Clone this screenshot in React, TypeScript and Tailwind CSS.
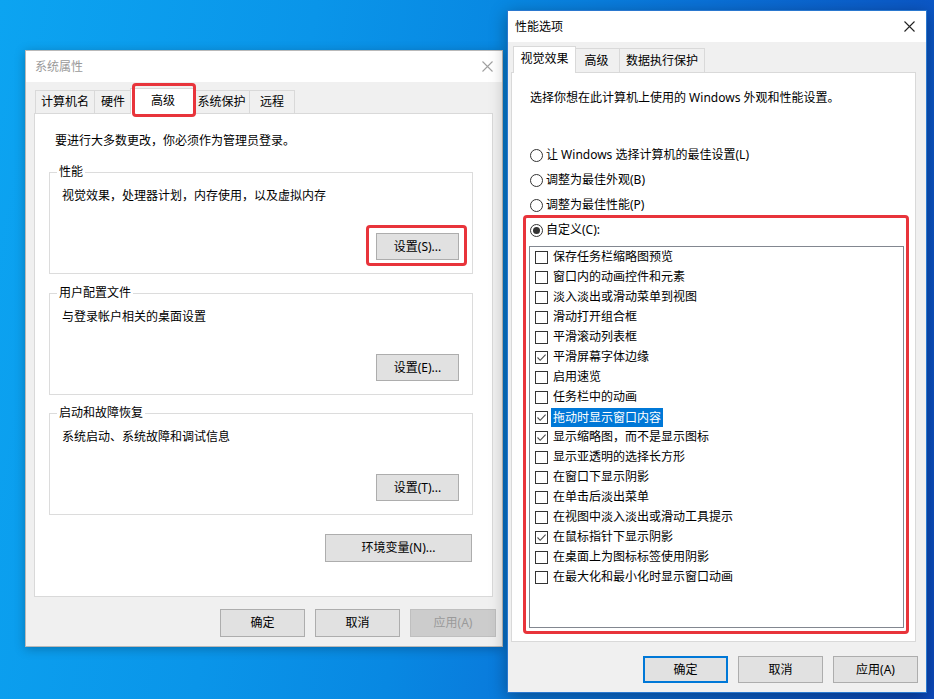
import React from "react";

const FONT = "font-['Noto_Sans','Noto_Sans_CJK_SC',sans-serif]";

type BtnProps = {
  label: string;
  w: number;
  h?: number;
  kind?: "normal" | "default" | "disabled";
};

function Button({ label, w, h = 27, kind = "normal" }: BtnProps) {
  const base = "flex items-center justify-center text-[12px] leading-[16px] shrink-0";
  const look =
    kind === "default"
      ? "bg-[#e1e1e1] border-2 border-[#0078d7] text-black"
      : kind === "disabled"
      ? "bg-[#cccccc] border border-[#bfbfbf] text-[#9a9a9a]"
      : "bg-[#e1e1e1] border border-[#adadad] text-black";
  return (
    <div className={`${base} ${look}`} style={{ width: w, height: h }}>
      {label}
    </div>
  );
}

function CloseIcon({ color }: { color: string }) {
  return (
    <svg width="11" height="11" viewBox="0 0 11 11" fill="none">
      <path d="M0.5 0.5 L10.5 10.5 M10.5 0.5 L0.5 10.5" stroke={color} strokeWidth="1.1" />
    </svg>
  );
}

function Check({ checked }: { checked: boolean }) {
  return (
    <div className="w-[13px] h-[13px] border border-[#333333] bg-white shrink-0 flex items-center justify-center">
      {checked && (
        <svg width="11" height="11" viewBox="0 0 11 11" fill="none">
          <path d="M1.5 5.5 L4.2 8.3 L9.6 2.6" stroke="#4a4a4a" strokeWidth="1.1" />
        </svg>
      )}
    </div>
  );
}

function Radio({ on }: { on?: boolean }) {
  return (
    <div className="w-[13px] h-[13px] rounded-full border border-[#333333] bg-white shrink-0 flex items-center justify-center">
      {on && <div className="w-[7px] h-[7px] rounded-full bg-[#333333]" />}
    </div>
  );
}

type Tab = { label: string; w: number; active?: boolean; mark?: boolean };

function TabRow({ tabs, pl, h, ah }: { tabs: Tab[]; pl: number; h: number; ah: number }) {
  return (
    <div className="flex items-end relative z-10" style={{ paddingLeft: pl }}>
      {tabs.map((t, i) =>
        t.active ? (
          <div
            key={t.label}
            className="relative -mx-[2px] -mb-[1px] bg-white border border-b-0 border-[#d9d9d9] flex items-center justify-center z-10"
            style={{ width: t.w + 4, height: ah }}
          >
            <span className="pb-[2px]">{t.label}</span>
            {t.mark && (
              <div className="absolute -top-[6px] left-[1px] -right-[1px] -bottom-[3px] border-[3px] border-[#e8343b] rounded-[4px]" />
            )}
          </div>
        ) : (
          <div
            key={t.label}
            className={`bg-[#f0f0f0] border-t border-r border-[#d9d9d9] flex items-center justify-center ${
              i === 0 ? "border-l" : ""
            }`}
            style={{ width: t.w, height: h }}
          >
            {t.label}
          </div>
        )
      )}
    </div>
  );
}

function GroupBox({
  title,
  text,
  btn,
}: {
  title: string;
  text: string;
  btn: React.ReactNode;
}) {
  return (
    <div className="relative w-[424px] h-[102px] border border-[#dcdcdc] flex flex-col">
      <span className="absolute -top-[9px] left-[7px] bg-white px-[2px] leading-[16px]">{title}</span>
      <div className="pl-[12px] pt-[15px] leading-[16px]">{text}</div>
      <div className="flex justify-end pr-[13px] mt-[29px]">{btn}</div>
    </div>
  );
}

const effects: [string, boolean, boolean?][] = [
  ["保存任务栏缩略图预览", false],
  ["窗口内的动画控件和元素", false],
  ["淡入淡出或滑动菜单到视图", false],
  ["滑动打开组合框", false],
  ["平滑滚动列表框", false],
  ["平滑屏幕字体边缘", true],
  ["启用速览", false],
  ["任务栏中的动画", false],
  ["拖动时显示窗口内容", true, true],
  ["显示缩略图，而不是显示图标", true],
  ["显示亚透明的选择长方形", false],
  ["在窗口下显示阴影", false],
  ["在单击后淡出菜单", false],
  ["在视图中淡入淡出或滑动工具提示", false],
  ["在鼠标指针下显示阴影", true],
  ["在桌面上为图标标签使用阴影", false],
  ["在最大化和最小化时显示窗口动画", false],
];

function SystemProperties() {
  return (
    <div className="absolute left-[25px] top-[50px] w-[478px] h-[597px] border border-[#b9b9b9] bg-[#f0f0f0] flex flex-col shadow-[0_2px_10px_rgba(0,0,0,0.25)]">
      <div className="h-[31px] bg-white flex items-center justify-between pl-[9px] pr-[9px] shrink-0">
        <span className="text-[#9a9a9a]">系统属性</span>
        <CloseIcon color="#a0a0a0" />
      </div>
      <div className="flex flex-col pl-[8px] pr-[9px] pt-[6px]">
        <TabRow
          pl={1}
          h={23}
          ah={26}
          tabs={[
            { label: "计算机名", w: 60 },
            { label: "硬件", w: 37 },
            { label: "高级", w: 62, active: true, mark: true },
            { label: "系统保护", w: 56 },
            { label: "远程", w: 45 },
          ]}
        />
        <div className="h-[484px] bg-white border border-[#d9d9d9] flex flex-col pl-[14px] pt-[19px]">
          <div className="ml-[6px] leading-[16px]">要进行大多数更改，你必须作为管理员登录。</div>
          <div className="mt-[23px]">
            <GroupBox
              title="性能"
              text="视觉效果，处理器计划，内存使用，以及虚拟内存"
              btn={
                <div className="relative">
                  <Button label="设置(S)..." w={83} h={27} />
                  <div className="absolute -top-[8px] -left-[10px] -right-[8px] -bottom-[6px] border-[3px] border-[#e8343b] rounded-[4px]" />
                </div>
              }
            />
          </div>
          <div className="mt-[19px]">
            <GroupBox title="用户配置文件" text="与登录帐户相关的桌面设置" btn={<Button label="设置(E)..." w={83} />} />
          </div>
          <div className="mt-[18px]">
            <GroupBox title="启动和故障恢复" text="系统启动、系统故障和调试信息" btn={<Button label="设置(T)..." w={83} />} />
          </div>
          <div className="w-[424px] flex justify-end pr-[1px] mt-[19px]">
            <Button label="环境变量(N)..." w={147} h={28} />
          </div>
        </div>
        <div className="flex justify-end gap-[10px] pr-[-3px] mt-[12px] mr-[-3px]">
          <Button label="确定" w={85} h={28} />
          <Button label="取消" w={85} h={28} />
          <Button label="应用(A)" w={86} h={28} kind="disabled" />
        </div>
      </div>
    </div>
  );
}

function PerformanceOptions() {
  return (
    <div className="absolute left-[507px] top-[10px] w-[420px] h-[683px] border border-[#2a78cf] bg-[#f0f0f0] flex flex-col shadow-[0_4px_16px_rgba(0,0,0,0.35)]">
      <div className="h-[31px] bg-white flex items-center justify-between pl-[7px] pr-[11px] shrink-0">
        <span className="text-black">性能选项</span>
        <CloseIcon color="#222222" />
      </div>
      <div className="flex flex-col pl-[3px] pr-[10px] pt-[4px]">
        <TabRow
          pl={4}
          h={24}
          ah={27}
          tabs={[
            { label: "视觉效果", w: 59, active: true },
            { label: "高级", w: 46 },
            { label: "数据执行保护", w: 85 },
          ]}
        />
        <div className="relative h-[570px] bg-white border border-[#d9d9d9] flex flex-col pl-[17px] pt-[17px]">
          <div className="ml-[1px] leading-[16px]">选择你想在此计算机上使用的 Windows 外观和性能设置。</div>
          <div className="mt-[41px] ml-[1px] flex flex-col gap-[9px]">
            {[
              "让 Windows 选择计算机的最佳设置(L)",
              "调整为最佳外观(B)",
              "调整为最佳性能(P)",
              "自定义(C):",
            ].map((r, i) => (
              <div key={r} className="h-[16px] flex items-center gap-[3px]">
                <Radio on={i === 3} />
                <span className="leading-[16px]">{r}</span>
              </div>
            ))}
          </div>
          <div className="mt-[8px] w-[375px] h-[382px] border border-[#828790] bg-white flex flex-col">
            {effects.map(([label, checked, sel]) => (
              <div key={label} className="h-[20px] flex items-center pl-[5px] gap-[5px] shrink-0">
                <Check checked={checked} />
                {sel ? (
                  <span className="-ml-[2px] px-[2px] bg-[#0078d7] text-white leading-[19px] h-[19px]">{label}</span>
                ) : (
                  <span className="leading-[16px]">{label}</span>
                )}
              </div>
            ))}
          </div>
          <div className="absolute left-[11px] top-[142px] w-[386px] h-[419px] border-[3px] border-[#e8343b] rounded-[4px] pointer-events-none" />
        </div>
        <div className="flex justify-end gap-[10px] mt-[14px] mr-[-2px]">
          <Button label="确定" w={85} kind="default" />
          <Button label="取消" w={85} />
          <Button label="应用(A)" w={85} />
        </div>
      </div>
    </div>
  );
}

export default function App() {
  return (
    <div
      className={`relative w-[934px] h-[699px] overflow-hidden text-[12px] text-black ${FONT} bg-[linear-gradient(100deg,#0ca4f1_0%,#0a95e9_30%,#0888e2_48%,#0a72d8_66%,#0b5cc9_84%,#0c49bc_100%)]`}
    >
      <SystemProperties />
      <PerformanceOptions />
    </div>
  );
}
